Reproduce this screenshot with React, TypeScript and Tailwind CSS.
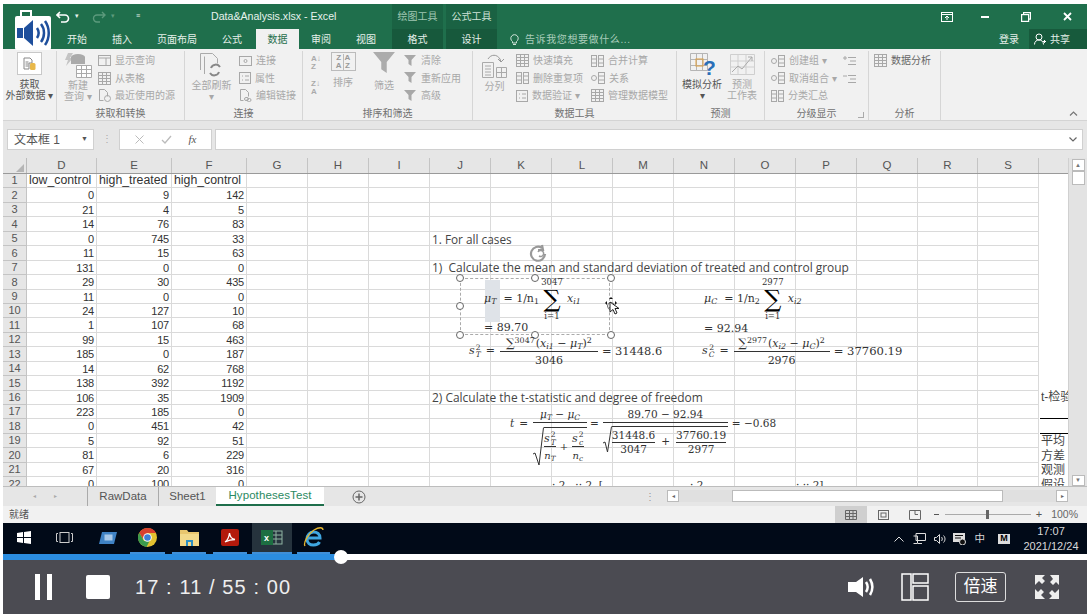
import React from "react";

const data: [string, string, string][] = [
  ["low_control", "high_treated", "high_control"],
  ["0", "9", "142"], ["21", "4", "5"], ["14", "76", "83"], ["0", "745", "33"], ["11", "15", "63"],
  ["131", "0", "0"], ["29", "30", "435"], ["11", "0", "0"], ["24", "127", "10"], ["1", "107", "68"],
  ["99", "15", "463"], ["185", "0", "187"], ["14", "62", "768"], ["138", "392", "1192"], ["106", "35", "1909"],
  ["223", "185", "0"], ["0", "451", "42"], ["5", "92", "51"], ["81", "6", "229"], ["67", "20", "316"],
  ["0", "100", "0"],
];

const sheetCols = [70, 75, 75, 61, 61, 61, 61, 61, 61, 61, 61, 61, 61, 61, 60, 61];
const headers = ["D", "E", "F", "G", "H", "I", "J", "K", "L", "M", "N", "O", "P", "Q", "R", "S"];

function Glyph({ kind }: { kind: string }) {
  const c = "#a8a8a8";
  if (kind === "table")
    return (
      <svg width="13" height="13" viewBox="0 0 13 13" fill="none" stroke={c}>
        <rect x=".5" y=".5" width="12" height="12" />
        <path d="M.5 3.500h12M.5 6.500h12M.5 9.500h12M4.500 .5v12M8.500 .5v12" />
      </svg>
    );
  if (kind === "window")
    return (
      <svg width="13" height="11" viewBox="0 0 13 11" fill="none" stroke={c}>
        <rect x=".5" y=".5" width="12" height="10" />
        <path d="M.5 3h12M8 3v7.500" />
      </svg>
    );
  if (kind === "doc")
    return (
      <svg width="13" height="13" viewBox="0 0 13 13" fill="none" stroke={c}>
        <path d="M1.500 .5h5l3 3v4M1.500 .5v11h4" />
        <circle cx="9.500" cy="9.500" r="3" />
      </svg>
    );
  if (kind === "eye")
    return (
      <svg width="13" height="10" viewBox="0 0 13 10" fill="none" stroke={c}>
        <rect x=".5" y=".5" width="12" height="9" />
        <circle cx="6.500" cy="5" r="1.500" />
      </svg>
    );
  if (kind === "list")
    return (
      <svg width="12" height="12" viewBox="0 0 12 12" fill="none" stroke={c}>
        <rect x=".5" y=".5" width="11" height="11" />
        <path d="M3 4h1M6 4h4M3 8h1M6 8h4" />
      </svg>
    );
  if (kind === "link")
    return (
      <svg width="13" height="13" viewBox="0 0 13 13" fill="none" stroke={c}>
        <path d="M1.500 .5h5l3 3v4M1.500 .5v11h3" />
        <rect x="5.500" y="8.500" width="4" height="3" rx="1.500" />
        <rect x="8" y="9.500" width="4" height="3" rx="1.500" />
      </svg>
    );
  if (kind === "funnel")
    return (
      <svg width="13" height="12" viewBox="0 0 13 12" fill={c}>
        <path d="M0 0h12L7.500 5v6l-3-2V5z" />
      </svg>
    );
  if (kind === "group")
    return (
      <svg width="14" height="12" viewBox="0 0 14 12" fill="none" stroke={c}>
        <circle cx="3" cy="6" r="2.500" />
        <rect x="7.500" y=".5" width="6" height="11" />
        <path d="M7.500 4h6M7.500 8h6" />
      </svg>
    );
  if (kind === "plus")
    return (
      <svg width="13" height="12" viewBox="0 0 13 12" fill="none" stroke={c}>
        <path d="M5 2.500h8M7 6h6M5 9.500h8M0 3h4M2 1v4" />
      </svg>
    );
  if (kind === "minus")
    return (
      <svg width="13" height="12" viewBox="0 0 13 12" fill="none" stroke={c}>
        <path d="M5 2.500h8M7 6h6M5 9.500h8M0 3h4" />
      </svg>
    );
  return (
    <svg width="13" height="12" viewBox="0 0 13 12" fill="none" stroke={c}>
      <rect x=".5" y=".5" width="5" height="11" />
      <rect x="7.500" y=".5" width="5" height="11" />
      <path d="M.5 4h5M.5 8h5M7.500 4h5M7.500 8h5" />
    </svg>
  );
}

function Item({ icon, label, dark }: { icon: string; label: string; dark?: boolean }) {
  return (
    <div className={`flex h-[17.5px] items-center gap-[4px] whitespace-nowrap text-[10px] ${dark ? "text-[#666]" : "text-[#a8a8a8]"}`}>
      <Glyph kind={icon} />
      <span>{label}</span>
    </div>
  );
}

function Group({ w, label, children }: { w: string; label: string; children: React.ReactNode }) {
  return (
    <div className={`relative flex flex-col border-r border-[#d6d6d6] ${w}`}>
      <div className="flex h-[52px] pt-[1px]">{children}</div>
      <div className="mt-auto text-center text-[10px] leading-[13px] text-[#707070]">{label}</div>
    </div>
  );
}

function BigLabel({ children, dark, w }: { children: React.ReactNode; dark?: boolean; w: string }) {
  return (
    <div className={`text-center text-[10px] leading-[11px] ${w} ${dark ? "text-[#555]" : "text-[#a8a8a8]"}`}>{children}</div>
  );
}

function Ribbon() {
  return (
    <div className="flex h-[71px] bg-[#f1f1f1] pt-[2px]">
      <Group w="w-[54px]" label="">
        <div className="flex w-full flex-col items-center">
          <div className="flex h-[23px] w-[25px] items-center justify-center border border-[#c8c8c8] bg-white">
            <svg width="13" height="14" viewBox="0 0 13 14">
              <path d="M1 1h6l2 2v3H6v6H1z" fill="#fff" stroke="#888" />
              <path d="M2.500 5h3M2.500 7h3M2.500 9h3" stroke="#888" />
              <rect x="7" y="6" width="5.500" height="7" rx="1.500" fill="#e8b84a" />
            </svg>
          </div>
          <BigLabel dark w="w-full">
            <div className="mt-[4px]">获取</div>
            <div className="whitespace-nowrap">外部数据 ▾</div>
          </BigLabel>
        </div>
      </Group>
      <Group w="w-[128px]" label="获取和转换">
        <div className="flex w-[38px] flex-col items-center pl-[4px]">
          <svg width="28" height="27" viewBox="0 0 28 27">
            <path d="M4 1l5 0-3 5 3 0-7 8 2-6-3 0z" fill="#c4c4c4" />
            <ellipse cx="14" cy="5" rx="7" ry="3" fill="#aaa" />
            <rect x="7" y="5" width="14" height="7" fill="#aaa" />
            <path d="M12.500 13.500h15v12h-15z M12.500 17.500h15M12.500 21.500h15M17.500 13.500v12M22.500 13.500v12" fill="#fff" stroke="#aaa" />
          </svg>
          <BigLabel w="w-[34px]">
            <div className="mt-[1px]">新建</div>
            <div>查询 ▾</div>
          </BigLabel>
        </div>
        <div className="ml-[3px]">
          <Item icon="window" label="显示查询" />
          <Item icon="table" label="从表格" />
          <Item icon="doc" label="最近使用的源" />
        </div>
      </Group>
      <Group w="w-[118px]" label="连接">
        <div className="flex w-[48px] flex-col items-center pl-[5px]">
          <svg width="26" height="27" viewBox="0 0 26 27" fill="none" stroke="#aaa">
            <path d="M1.500 18V1.500h12l5 5v5" />
            <path d="M5.500 22V4.500" />
            <path d="M21 15a5 5 0 0 0-9 1M11 21a5 5 0 0 0 9-1" stroke="#888" strokeWidth="2" />
          </svg>
          <BigLabel w="w-[44px]">
            <div className="mt-[1px] whitespace-nowrap">全部刷新</div>
            <div>▾</div>
          </BigLabel>
        </div>
        <div className="ml-[6px]">
          <Item icon="eye" label="连接" />
          <Item icon="list" label="属性" />
          <Item icon="link" label="编辑链接" />
        </div>
      </Group>
      <Group w="w-[170px]" label="排序和筛选">
        <div className="flex w-[22px] flex-col gap-[9px] pl-[8px] pt-[3px] text-[8px] font-bold leading-[8px] text-[#aaa]">
          <div>A↓<br />Z</div>
          <div>Z↓<br />A</div>
        </div>
        <div className="ml-[3px] flex flex-col items-center">
          <div className="flex h-[19px] w-[25px] items-center justify-center gap-[1px] border border-[#bbb] text-[8px] font-bold leading-[8px] text-[#999]">
            <span className="text-center">Z<br />A</span>
            <span className="border-l border-[#bbb] pl-[1px] text-center">A<br />Z</span>
          </div>
          <BigLabel w="w-[30px]"><div className="mt-[6px]">排序</div></BigLabel>
        </div>
        <div className="ml-[11px] flex flex-col items-center">
          <svg width="24" height="21" viewBox="0 0 24 23" fill="#acacac"><path d="M0 0h24L15 11v12l-6-4V11z" /></svg>
          <BigLabel w="w-[30px]"><div className="mt-[7px]">筛选</div></BigLabel>
        </div>
        <div className="ml-[5px]">
          <Item icon="funnel" label="清除" />
          <Item icon="funnel" label="重新应用" />
          <Item icon="funnel" label="高级" />
        </div>
      </Group>
      <Group w="w-[204px]" label="数据工具">
        <div className="flex w-[37px] flex-col items-center pl-[6px]">
          <svg width="27" height="27" viewBox="0 0 27 27" fill="none" stroke="#aaa">
            <path d="M1.500 10.500h11v15h-11zM4 14h6M4 17h6M4 20h6M4 23h6" />
            <path d="M15.500 15.500h10v10h-10zM15.500 20.500h10M20.500 15.500v10" />
            <path d="M7 7c3-5 9-5 12 0l1 3M23 7l-3 3-3-3" stroke="#999" />
          </svg>
          <BigLabel w="w-[30px]"><div className="mt-[2px]">分列</div></BigLabel>
        </div>
        <div className="ml-[6px]">
          <Item icon="table" label="快速填充" />
          <Item icon="pair" label="删除重复项" />
          <Item icon="list" label="数据验证 ▾" />
        </div>
        <div className="ml-[8px]">
          <Item icon="pair" label="合并计算" />
          <Item icon="group" label="关系" />
          <Item icon="table" label="管理数据模型" />
        </div>
      </Group>
      <Group w="w-[88px]" label="预测">
        <div className="flex w-[47px] flex-col items-center pl-[3px]">
          <div className="relative h-[27px] w-[26px]">
            <svg width="26" height="26" viewBox="0 0 26 26" fill="none">
              <path d="M1.500 1.500h17v17h-17zM1.500 7.500h17M1.500 13.500h17M7.500 1.500v17M13.500 1.500v17" stroke="#b5b5b5" />
              <rect x="7" y="7" width="7" height="7" stroke="#e0a040" />
              <text x="14" y="23" fontSize="21" fontWeight="700" fill="#2a6fb8" fontFamily="Liberation Sans">?</text>
            </svg>
          </div>
          <BigLabel dark w="w-[46px]">
            <div className="whitespace-nowrap">模拟分析</div>
            <div>▾</div>
          </BigLabel>
        </div>
        <div className="flex w-[36px] flex-col items-center">
          <svg width="25" height="25" viewBox="0 0 25 25" fill="none" stroke="#aaa">
            <path d="M.5 2.500h24v20H.5zM.5 9h24M.5 15h24M8 2.500v20M16 2.500v20" stroke="#cfcfcf" />
            <path d="M2 20l6-6 4 3 10-12M18 5h4v4" />
          </svg>
          <BigLabel w="w-[34px]">
            <div className="mt-[2px]">预测</div>
            <div className="whitespace-nowrap">工作表</div>
          </BigLabel>
        </div>
      </Group>
      <Group w="w-[104px]" label="分级显示">
        <div className="ml-[6px]">
          <Item icon="group" label="创建组 ▾" />
          <Item icon="group" label="取消组合 ▾" />
          <Item icon="pair" label="分类汇总" />
        </div>
        <div className="ml-[6px] flex flex-col gap-[6px] pt-[3px]">
          <Glyph kind="plus" />
          <Glyph kind="minus" />
        </div>
        <span className="absolute bottom-[2px] right-[4px] h-[6px] w-[6px] border-b border-r border-[#aaa]" />
      </Group>
      <Group w="w-[72px]" label="分析">
        <div className="ml-[5px]">
          <Item dark icon="table" label="数据分析" />
        </div>
      </Group>
      <div className="flex flex-1 items-end justify-end pb-[4px] pr-[9px]">
        <svg width="9" height="5" viewBox="0 0 9 5" fill="none" stroke="#777" strokeWidth="1.200"><path d="M1 4.500l3.500-3.500 3.500 3.500" /></svg>
      </div>
    </div>
  );
}

function Titlebar() {
  return (
    <div className="bg-[#1f6f4c] text-white">
      <div className="flex h-[25px] items-center text-[#e8f2ec]">
        <div className="flex w-[207px] items-center pl-[53px]">
          <svg width="14" height="12" viewBox="0 0 14 12" fill="none" stroke="#fff" strokeWidth="1.600">
            <path d="M4 1L1 4l3 3M1 4h8a3.500 3.500 0 0 1 0 7H5" />
          </svg>
          <span className="ml-[5px] text-[7px]">▾</span>
          <svg className="ml-[13px]" width="14" height="12" viewBox="0 0 14 12" fill="none" stroke="#5c9a7c" strokeWidth="1.400">
            <path d="M10 1l3 3-3 3M13 4H5a3.500 3.500 0 0 0 0 7h3" />
          </svg>
          <span className="ml-[5px] text-[7px] text-[#5c9a7c]">▾</span>
          <span className="ml-[21px] text-[7px]">≡</span>
        </div>
        <div className="ml-[1px] w-[126px] whitespace-nowrap text-[10.6px]">Data&amp;Analysis.xlsx - Excel</div>
        <div className="ml-[55px] flex h-full">
          <div className="flex w-[51px] items-center justify-center bg-[#1a6243] text-[10px] text-[#9fc6b2]">绘图工具</div>
          <div className="ml-[3px] flex w-[51px] items-center justify-center bg-[#1a6243] text-[10px] text-[#cfe3d8]">公式工具</div>
        </div>
        <div className="ml-auto flex items-center pr-[15px]">
          <svg width="12" height="10" viewBox="0 0 12 10" fill="none" stroke="#fff"><rect x=".5" y=".5" width="11" height="9" /><path d="M.5 2.500h11M6 8V4M4 6l2-2 2 2" /></svg>
          <span className="ml-[28px] h-[2px] w-[8px] bg-white" />
          <svg className="ml-[32px]" width="10" height="10" viewBox="0 0 10 10" fill="none" stroke="#fff" strokeWidth="1.200"><rect x=".6" y="2.600" width="7" height="6.800" /><path d="M2.600 2.500V.6h6.800v6.500H8" /></svg>
          <svg className="ml-[32px]" width="9" height="9" viewBox="0 0 9 9" stroke="#fff" strokeWidth="1.800"><path d="M1 1l7 7M8 1L1 8" /></svg>
        </div>
      </div>
      <div className="flex h-[20px] items-stretch text-[10px]">
        <div className="flex w-[48px]" />
        {[["开始", "w-[52px]"], ["插入", "w-[38px]"], ["页面布局", "w-[72px]"], ["公式", "w-[38px] mr-[5px]"]].map(([t, w]) => (
          <div key={t} className={`flex items-center justify-center text-[#e6f0ea] ${w}`}>{t}</div>
        ))}
        <div className="flex w-[43px] items-center justify-center bg-[#f1f1f1] text-[#1f6f4c]">数据</div>
        <div className="flex w-[44px] items-center justify-center text-[#e6f0ea]">审阅</div>
        <div className="flex w-[46px] items-center justify-center text-[#e6f0ea]">视图</div>
        <div className="ml-[3px] flex w-[51px] items-center justify-center bg-[#17593c] text-[#e6f0ea]">格式</div>
        <div className="ml-[3px] flex w-[51px] items-center justify-center bg-[#17593c] text-[#e6f0ea]">设计</div>
        <div className="ml-[13px] flex items-center gap-[6px] text-[#a9cdbb]">
          <svg width="9" height="11" viewBox="0 0 9 11" fill="none" stroke="#cfe3d8"><path d="M2.500 7.500a3.700 3.700 0 1 1 4 0V9h-4zM3 10.500h3" /></svg>
          <span className="tracking-[0.6px]">告诉我您想要做什么...</span>
        </div>
        <div className="ml-auto flex items-center text-[#e6f0ea]">
          <span className="mr-[10px]">登录</span>
          <div className="flex h-full w-[58px] items-center gap-[4px] bg-[#175a3c] pl-[5px]">
            <svg width="12" height="12" viewBox="0 0 12 12" fill="none" stroke="#fff"><circle cx="5" cy="4" r="3" /><path d="M.5 11.500c0-3 2-4.500 4.500-4.500s4.500 1.500 4.500 4.500M9 8.500h3M10.500 7v3" /></svg>
            <span>共享</span>
          </div>
        </div>
      </div>
    </div>
  );
}

function FormulaBar() {
  return (
    <div className="flex h-[38px] items-start border-t border-[#d4d4d4] bg-[#e6e6e6] pl-[4px] pr-[4px] pt-[8px]">
      <div className="flex h-[21px] w-[87px] items-center justify-between border border-[#d0d0d0] bg-white pl-[6px] pr-[5px] text-[12px] text-[#555]">
        <span>文本框 1</span><span className="text-[7px]">▼</span>
      </div>
      <span className="w-[25px] pt-[2px] text-center text-[10px] text-[#aaa]">⋮</span>
      <div className="flex h-[21px] w-[93px] items-center justify-around border border-[#d0d0d0] bg-white px-[6px] text-[#bbb]">
        <svg width="9" height="9" viewBox="0 0 9 9" stroke="#bbb"><path d="M.5.5l8 8M8.500.5l-8 8" /></svg>
        <svg width="11" height="9" viewBox="0 0 11 9" fill="none" stroke="#bbb" strokeWidth="1.300"><path d="M1 5l3 3 6-7" /></svg>
        <span className="font-['Liberation_Serif'] text-[11px] italic text-[#555]">fx</span>
      </div>
      <div className="ml-[3px] flex h-[21px] flex-1 items-center justify-end border border-[#d0d0d0] bg-white pr-[5px]">
        <svg width="8" height="5" viewBox="0 0 8 5" fill="none" stroke="#666" strokeWidth="1.200"><path d="M.5.5L4 4 7.500.5" /></svg>
      </div>
    </div>
  );
}

function Sub({ children }: { children: React.ReactNode }) {
  return <span className="align-[-2px] text-[0.72em] leading-none">{children}</span>;
}
function Sup({ children }: { children: React.ReactNode }) {
  return <span className="align-[4px] text-[0.72em] leading-none">{children}</span>;
}
function Frac({ top, bottom, w, low }: { top: React.ReactNode; bottom: React.ReactNode; w?: string; low?: string }) {
  return (
    <span className={`inline-flex flex-col items-center ${w ?? ""}`}>
      <span className="w-full whitespace-nowrap border-b border-[#333] text-center leading-[14px]">{top}</span>
      <span className={`whitespace-nowrap leading-[13px] ${low ?? ""}`}>{bottom}</span>
    </span>
  );
}
function Float({ x, y, className, children }: { x: string; y: string; className?: string; children: React.ReactNode }) {
  return <div className={`absolute whitespace-nowrap ${x} ${y} ${className ?? ""}`}>{children}</div>;
}
function SS({ s }: { s: string }) {
  return (
    <span className="inline-flex items-center italic">
      <span className="text-[11px]">s</span>
      <span className="ml-[1px] flex flex-col items-center text-[7.5px] leading-[7.5px]">
        <span className="not-italic">2</span>
        <span>{s}</span>
      </span>
    </span>
  );
}

function SumEq({ sym, n, up, idx }: { sym: React.ReactNode; n: string; up: string; idx: string }) {
  return (
    <div className="flex items-center font-['DejaVu_Serif'] text-[11px] text-[#333]">
      <span className="italic">μ<Sub>{sym}</Sub></span>
      <span className="ml-[7px]">= 1/n<Sub>{n}</Sub></span>
      <span className="mx-[3px] flex w-[20px] flex-col items-center">
        <span className="text-[8.5px] leading-[9px]">{up}</span>
        <span className="text-[24px] leading-[25px] text-black">∑</span>
        <span className="text-[8.5px] leading-[8px]">i=1</span>
      </span>
      <span className="ml-[2px] italic">x<Sub>{idx}</Sub></span>
    </div>
  );
}

function Handle({ x, y }: { x: string; y: string }) {
  return <span className={`absolute h-[8px] w-[8px] rounded-full border border-[#666] bg-white ${x} ${y}`} />;
}

function Sheet() {
  const tpl = sheetCols.map((c) => `${c}px`).join(" ");
  return (
    <div className="relative h-[328px] overflow-hidden bg-white font-['Liberation_Sans','Noto_Sans_CJK_SC',sans-serif] text-[#333]">
      <div className="flex h-[16px] border-b border-[#9a9a9a] bg-[#e6e6e6] text-[11.5px] text-[#555]">
        <div className="flex w-[24px] shrink-0 items-end justify-end border-r border-[#bbb] pb-[1px] pr-[2px]">
          <span className="h-0 w-0 border-b-[8px] border-l-[8px] border-b-[#b5b5b5] border-l-transparent" />
        </div>
        {headers.map((h, i) => (
          <div key={h} style={{ width: sheetCols[i] }} className="flex shrink-0 items-center justify-center border-r border-[#c4c4c4]">{h}</div>
        ))}
      </div>
      {data.map((r, i) => (
        <div key={i} className="flex h-[14.45px]">
          <div className="flex w-[24px] shrink-0 items-center justify-center border-b border-r border-[#c4c4c4] bg-[#e6e6e6] text-[11px] text-[#555]">{i + 1}</div>
          <div className="grid flex-1" style={{ gridTemplateColumns: tpl }}>
            {headers.map((h, j) => (
              <div key={h} className={`overflow-hidden whitespace-nowrap border-b border-r border-[#dadada] px-[2px] ${i > 0 ? "text-right text-[11px] leading-[14px] tracking-[-0.2px]" : "text-left text-[12.3px] leading-[12px]"}`}>
                {j < 3 ? r[j] : ""}
              </div>
            ))}
          </div>
        </div>
      ))}

      <Float x="left-[429px]" y="top-[73px]" className="font-['Open_Sans'] text-[11.8px] text-[#444]">1. For all cases</Float>
      <Float x="left-[429px]" y="top-[101px]" className="font-['Open_Sans'] text-[11.95px] text-[#444]">1)&nbsp; Calculate the mean and standard deviation of treated and control group</Float>
      <Float x="left-[429px]" y="top-[231px]" className="font-['Open_Sans'] text-[11.95px] text-[#444]">2) Calculate the t-statistic and degree of freedom</Float>

      <Float x="left-[457px]" y="top-[120px]" className="h-[57px] w-[150px] border border-dashed border-[#aaa]">
        <span className="absolute left-[24px] top-[1px] h-[42px] w-[15px] bg-[#dfe3e8]" />
        <Handle x="-left-[5px]" y="-top-[5px]" />
        <Handle x="left-[70px]" y="-top-[5px]" />
        <Handle x="left-[146px]" y="-top-[5px]" />
        <Handle x="-left-[5px]" y="top-[23px]" />
        <Handle x="left-[146px]" y="top-[23px]" />
        <Handle x="-left-[5px]" y="top-[52px]" />
        <Handle x="left-[70px]" y="top-[52px]" />
        <Handle x="left-[146px]" y="top-[52px]" />
      </Float>
      <Float x="left-[481px]" y="top-[120px]"><SumEq sym="T" n="1" up="3047" idx="i1" /></Float>
      <Float x="left-[481px]" y="top-[162px]" className="font-['DejaVu_Serif'] text-[11px]">= 89.70</Float>
      <Float x="left-[466px]" y="top-[178px]" className="flex font-['DejaVu_Serif'] text-[11px]">
        <span className="mt-[7px]"><SS s="T" /></span>
        <span className="ml-[5px] mt-[7px]">=</span>
        <span className="ml-[5px]"><Frac w="w-[98px]" low="pt-[2px]" top={<><span className="text-[12px]">∑</span><Sup>3047</Sup><span className="ml-[1px]">(</span><i>x<Sub>i1</Sub></i> − <i>μ<Sub>T</Sub></i>)<Sup>2</Sup></>} bottom="3046" /></span>
        <span className="ml-[4px] mt-[7px] text-[11.4px]">= 31448.6</span>
      </Float>

      <Float x="left-[701px]" y="top-[120px]"><SumEq sym="C" n="2" up="2977" idx="i2" /></Float>
      <Float x="left-[701px]" y="top-[163px]" className="font-['DejaVu_Serif'] text-[11px]">= 92.94</Float>
      <Float x="left-[699px]" y="top-[178px]" className="flex font-['DejaVu_Serif'] text-[11px]">
        <span className="mt-[7px]"><SS s="C" /></span>
        <span className="ml-[5px] mt-[7px]">=</span>
        <span className="ml-[5px]"><Frac w="w-[96px]" low="pt-[2px]" top={<><span className="text-[12px]">∑</span><Sup>2977</Sup><span className="ml-[1px]">(</span><i>x<Sub>i2</Sub></i> − <i>μ<Sub>C</Sub></i>)<Sup>2</Sup></>} bottom="2976" /></span>
        <span className="ml-[4px] mt-[7px] text-[11.6px]">= 37760.19</span>
      </Float>

      <Float x="left-[507px]" y="top-[249px]" className="flex font-['DejaVu_Serif'] text-[10.5px] text-[#333]">
        <span className="mt-[9px] italic">t</span>
        <span className="ml-[5px] mt-[9px]">=</span>
        <span className="ml-[5px] flex w-[54px] flex-col">
          <span className="w-full border-b border-[#333] text-center leading-[15px]"><i>μ<Sub>T</Sub></i> − <i>μ<Sub>C</Sub></i></span>
          <span className="mt-[4px] flex items-start">
            <svg className="shrink-0" width="11" height="39" viewBox="0 0 11 39" fill="none" stroke="#333"><path d="M0 27l2-1 4 12L10.500 .5" /></svg>
            <span className="flex flex-1 items-center gap-[4px] border-t border-[#333] pt-[3px] text-[10px] leading-[13px]">
              <Frac low="pt-[2px]" top={<SS s="T" />} bottom={<i>n<Sub>T</Sub></i>} />
              <span>+</span>
              <Frac low="pt-[2px]" top={<SS s="c" />} bottom={<i>n<Sub>c</Sub></i>} />
            </span>
          </span>
        </span>
        <span className="ml-[3px] mt-[9px]">=</span>
        <span className="ml-[4px] flex w-[125px] flex-col">
          <span className="w-full border-b border-[#333] text-center leading-[15px]">89.70 − 92.94</span>
          <span className="mt-[3px] flex items-start">
            <svg className="shrink-0" width="9" height="27" viewBox="0 0 9 27" fill="none" stroke="#333"><path d="M0 17l2-1 2.500 10L8.500 .5" /></svg>
            <span className="flex flex-1 items-center gap-[6px] border-t border-[#333] pt-[1px]">
              <Frac top="31448.6" bottom="3047" />
              <span>+</span>
              <Frac top="37760.19" bottom="2977" />
            </span>
          </span>
        </span>
        <span className="ml-[4px] mt-[9px]">= −0.68</span>
      </Float>

      <Float x="left-[549px]" y="top-[320px]" className="font-['DejaVu_Serif'] text-[10.5px] text-[#333]">· 2 &nbsp; ·· 2 &nbsp;[</Float>
      <Float x="left-[687px]" y="top-[320px]" className="font-['DejaVu_Serif'] text-[10.5px] text-[#333]">· 2</Float>
      <Float x="left-[793px]" y="top-[320px]" className="font-['DejaVu_Serif'] text-[10.5px] text-[#333]">· ·· 2]</Float>

      <Float x="left-[1038px]" y="top-[232px]" className="w-[28px] overflow-hidden text-[12px] leading-[15px] text-[#444]">t-检验</Float>
      <Float x="left-[1037px]" y="top-[260px]" className="h-0 w-[29px] border-t border-black" />
      <Float x="left-[1037px]" y="top-[275px]" className="h-0 w-[29px] border-t border-black" />
      <Float x="left-[1038px]" y="top-[276px]" className="w-[28px] overflow-hidden text-[12px] leading-[14.6px] text-[#444]">
        <div>平均</div><div>方差</div><div>观测</div><div>假设</div>
      </Float>

      <div className="absolute bottom-0 right-0 top-0 flex w-[19px] flex-col items-center border-l border-[#d0d0d0] bg-[#e3e3e3] pt-[1px]">
        <div className="flex h-[12px] w-[13px] items-center justify-center border border-[#bbb] bg-white text-[6px] text-[#777]">▲</div>
        <div className="h-[14px] w-[13px] border border-[#bbb] bg-white" />
        <div className="mt-auto flex h-[11px] w-[13px] items-center justify-center border border-[#bbb] bg-white text-[6px] text-[#777]">▼</div>
      </div>
    </div>
  );
}

function SheetTabs() {
  return (
    <div className="flex h-[20px] border-t border-[#bdbdbd] bg-[#e6e6e6] text-[11.5px] text-[#555]">
      <div className="flex w-[84px] items-center justify-center gap-[18px] text-[6px] text-[#aaa]"><span>◂</span><span>▸</span></div>
      <div className="flex w-[71px] items-center justify-center border-l border-[#aaa]">RawData</div>
      <div className="flex w-[58px] items-center justify-center border-l border-[#aaa]">Sheet1</div>
      <div className="flex w-[108px] items-center justify-center border-b-2 border-[#1f6f4c] bg-white tracking-[0.1px] text-[#2b8a62]">HypothesesTest</div>
      <div className="ml-[28px] flex items-center">
        <svg width="14" height="14" viewBox="0 0 14 14" fill="none" stroke="#666"><circle cx="7" cy="7" r="6" /><path d="M3.500 7h7M7 3.500v7" strokeWidth="1.500" /></svg>
      </div>
      <div className="ml-[279px] flex items-center text-[10px] text-[#999]">⋮</div>
      <div className="ml-[12px] mt-[3px] flex h-[12px] w-[401px] items-stretch bg-[#e0e0e0]">
        <div className="flex w-[12px] items-center justify-center border border-[#bbb] bg-white text-[6px] text-[#666]">◂</div>
        <div className="ml-[53px] w-[271px] border border-[#bbb] bg-white" />
        <div className="ml-auto flex w-[12px] items-center justify-center border border-[#bbb] bg-white text-[6px] text-[#666]">▸</div>
      </div>
    </div>
  );
}

function StatusBar() {
  return (
    <div className="flex h-[17px] items-center bg-[#f1f1f1] pl-[6px] text-[10px] text-[#555]">
      <span>就绪</span>
      <div className="ml-auto flex h-full items-center">
        <div className="flex h-full w-[32px] items-center justify-center bg-[#cfcfcf]">
          <svg width="12" height="10" viewBox="0 0 12 10" fill="none" stroke="#666"><path d="M.5.5h11v9H.5zM.5 3.500h11M.5 6.500h11M4.500 .5v9M8 .5v9" /></svg>
        </div>
        <svg className="ml-[11px]" width="11" height="10" viewBox="0 0 11 10" fill="none" stroke="#666"><rect x=".5" y=".5" width="10" height="9" /><rect x="3" y="3" width="5" height="4" /></svg>
        <svg className="ml-[20px]" width="12" height="10" viewBox="0 0 12 10" fill="none" stroke="#666"><path d="M.5 .5h11v9H.5zM6 .5v4H9" /></svg>
        <span className="ml-[13px] h-[1px] w-[5px] bg-[#555]" />
        <div className="relative ml-[6px] h-[1px] w-[86px] bg-[#aaa]">
          <span className="absolute left-[41px] -top-[4px] h-[9px] w-[3px] bg-[#666]" />
        </div>
        <span className="ml-[5px] text-[11px]">+</span>
        <span className="ml-[9px] mr-[9px] text-[10.5px] text-[#666]">100%</span>
      </div>
    </div>
  );
}

function Slot({ w, active, children, className }: { w: string; active?: boolean; children: React.ReactNode; className?: string }) {
  return (
    <div className={`flex h-full items-center justify-center border-b-2 ${active ? "border-[#3f8fd8]" : "border-transparent"} ${w} ${className ?? ""}`}>
      {children}
    </div>
  );
}

function Taskbar() {
  return (
    <div className="flex h-[31px] items-center bg-[#010a18] text-white">
      <Slot w="w-[42px]">
        <svg width="14" height="13" viewBox="0 0 14 13" fill="#fff"><path d="M0 2l6-1v5H0zM7 1l7-1v6H7zM0 7h6v5l-6-1zM7 7h7v6l-7-1z" /></svg>
      </Slot>
      <Slot w="w-[38px]">
        <svg width="19" height="11" viewBox="0 0 19 11" fill="none" stroke="#ccc"><rect x="5" y=".5" width="9" height="10" /><path d="M3 1.500H1.500v8H3M16 1.500h1.500v8H16" /></svg>
      </Slot>
      <Slot w="w-[47px]">
        <svg width="20" height="12" viewBox="0 0 20 12"><path d="M5 0h15l-3 12H2z" fill="#3f82c4" /><rect x="7.500" y="2.500" width="8" height="6" fill="#a9c9e8" /></svg>
      </Slot>
      <Slot w="w-[35px]" active>
        <svg width="19" height="19" viewBox="0 0 19 19">
          <circle cx="9.500" cy="9.500" r="9.500" fill="#e2c130" />
          <path d="M9.500 0A9.500 9.500 0 0 0 1.300 4.700L5 11l4.500-6H18A9.500 9.500 0 0 0 9.500 0z" fill="#d8402f" />
          <path d="M1.300 4.700A9.500 9.500 0 0 0 8.500 19l3-6H6z" fill="#3a9a4e" />
          <circle cx="9.500" cy="9.500" r="4.300" fill="#fff" /><circle cx="9.500" cy="9.500" r="3.300" fill="#3f7fd6" />
        </svg>
      </Slot>
      <Slot w="w-[34px]" active className="ml-[7px]">
        <svg width="19" height="16" viewBox="0 0 19 16"><path d="M0 0h7l1.500 2H19v14H0z" fill="#e8c66e" /><rect y="4" width="19" height="12" fill="#f2d98a" /><rect x="6" y="10" width="7" height="6" fill="#2b8fc4" /><rect x="8" y="12" width="3" height="4" fill="#f2d98a" /></svg>
      </Slot>
      <Slot w="w-[34px]" active className="ml-[7px]">
        <div className="flex h-[17px] w-[18px] items-center justify-center rounded-[2px] bg-[#b31a0c]">
          <svg width="12" height="12" viewBox="0 0 12 12" fill="none" stroke="#fff" strokeWidth="1.300"><path d="M1 10c3-2 4-5 4.500-9 .5 4 2 6 5.500 6.500C7 7.500 4 8.500 1 10z" /></svg>
        </div>
      </Slot>
      <Slot w="w-[40px]" active className="ml-[5px] bg-[#26333d]">
        <svg width="22" height="15" viewBox="0 0 22 15"><rect x="10" y="1" width="11" height="13" fill="none" stroke="#8fb5a3" /><path d="M10 5h11M10 9h11M15 1v13" stroke="#8fb5a3" /><rect width="12" height="15" fill="#1d6f42" /><text x="3" y="11" fontSize="9" fontWeight="700" fontFamily="Liberation Sans" fill="#fff">x</text></svg>
      </Slot>
      <Slot w="w-[33px]" active className="ml-[5px]">
        <svg width="21" height="21" viewBox="0 0 21 21" fill="none">
          <path d="M4 11h13c0-4-3-6-6.500-6S4 8 4 12s3 6 6.500 6c3 0 5-1 6-3" stroke="#3fa7e0" strokeWidth="3" />
          <path d="M2 19C0 16 5 7 11 3c5-3 9-3 9 0" stroke="#e8b830" strokeWidth="1.300" />
        </svg>
      </Slot>
      <div className="ml-auto flex items-center pr-[6px] text-[#d8d8d8]">
        <svg width="10" height="6" viewBox="0 0 10 6" fill="none" stroke="#ddd"><path d="M.5 5.500L5 1l4.500 4.500" /></svg>
        <svg className="ml-[9px]" width="13" height="11" viewBox="0 0 13 11" fill="none" stroke="#ddd"><path d="M3 .5h9.500v7H3zM.5 3h4v7.500h-4M5 10.500h4" /></svg>
        <svg className="ml-[8px]" width="12" height="10" viewBox="0 0 12 10" fill="none" stroke="#ddd"><path d="M.5 3.500h2l3-3v9l-3-3h-2zM7.500 3c1 1 1 3 0 4M9.500 1.500c2 2 2 5 0 7" /></svg>
        <svg className="ml-[7px]" width="13" height="12" viewBox="0 0 13 12" fill="#ddd"><rect width="12" height="9" /><path d="M2 2.500h8M2 5h6" stroke="#111" /><circle cx="9.500" cy="9" r="3" fill="#111" stroke="#ddd" /></svg>
        <span className="ml-[9px] text-[10.5px]">中</span>
        <span className="ml-[13px] flex h-[10px] w-[12px] items-center justify-center bg-[#ddd] text-[9px] font-bold text-black">M</span>
        <div className="ml-[11px] w-[60px] text-center text-[11px] leading-[15px]">
          <div>17:07</div>
          <div className="whitespace-nowrap">2021/12/24</div>
        </div>
      </div>
    </div>
  );
}

function Player() {
  return (
    <div>
      <div className="relative h-[6px] bg-white">
        <div className="h-full w-[338px] bg-[#2b8de0]" />
        <span className="absolute left-[331px] top-[-4px] h-[14px] w-[14px] rounded-full bg-white" />
      </div>
      <div className="flex h-[55px] items-center bg-[#4b4b52] pb-[2px] text-white">
        <div className="ml-[32px] flex gap-[7px]">
          <span className="h-[26px] w-[5px] bg-white" />
          <span className="h-[26px] w-[5px] bg-white" />
        </div>
        <span className="ml-[34px] h-[24px] w-[24px] rounded-[2px] bg-white" />
        <span className="ml-[25px] whitespace-nowrap text-[20px] tracking-[1.1px] text-[#eee]">17 : 11 / 55 : 00</span>
        <div className="ml-auto flex items-center pr-[27px]">
          <svg width="28" height="24" viewBox="0 0 28 24" fill="#fff"><path d="M0 7h8l7-5v20l-7-5H0z" /><path d="M18 7c2 3 2 7 0 10M22 4c3 5 3 11 0 16" stroke="#fff" strokeWidth="2.500" fill="none" /></svg>
          <svg className="ml-[25px]" width="28" height="28" viewBox="0 0 28 28" fill="none" stroke="#fff" strokeWidth="1.500"><rect x="1" y="1" width="9" height="26" /><rect x="12" y="1" width="15" height="9" /><rect x="12" y="13" width="15" height="14" /></svg>
          <div className="ml-[26px] flex h-[30px] w-[51px] items-center justify-center rounded-[3px] border border-[#ddd] text-[17px]">倍速</div>
          <svg className="ml-[28px]" width="26" height="26" viewBox="0 0 26 26" fill="#eee"><path d="M1 1h10L8 4l3 3-3 3-3-3-4 4zM25 1v10l-3-3-3 3-3-3 3-3-3-4zM1 25V15l3 3 3-3 3 3-3 3 4 4zM25 25H15l3-3-3-3 3-3 3 3 4-4z" /></svg>
        </div>
      </div>
    </div>
  );
}

export default function App() {
  return (
    <div className="relative h-[614px] w-[1089px] overflow-hidden bg-white pl-[3px] pr-[2px] pt-[4px] font-['Liberation_Sans','Noto_Sans_CJK_SC',sans-serif]">
      <Titlebar />
      <Ribbon />
      <FormulaBar />
      <Sheet />
      <SheetTabs />
      <StatusBar />
      <Taskbar />
      <Player />
      <div className="absolute left-[20px] top-[10px] h-[8px] w-[12px] border-x-2 border-t-2 border-white" />
      <div className="absolute left-[15px] top-[16px] flex h-[34px] w-[36px] items-center justify-center rounded-[2px] bg-white">
        <svg width="34" height="28" viewBox="0 0 34 28" fill="#1e4f9c">
          <rect x="1" y="9" width="6" height="10" />
          <path d="M8 9l9-8v26l-9-8z" />
          <path d="M21 9c2 3 2 7 0 10M25 5c4 5 4 13 0 18M29 2c5 7 5 17 0 24" stroke="#1e4f9c" strokeWidth="2.500" fill="none" />
        </svg>
      </div>
      <svg className="absolute left-[527px] top-[244px]" width="22" height="20" viewBox="0 0 22 20" fill="none" stroke="#999" strokeWidth="2.200">
        <path d="M18 10a7 7 0 1 1-3-6" /><path d="M11 8a3 3 0 1 1 1 4" strokeWidth="1.500" /><path d="M15 1l1 5-5 0" />
      </svg>
      <svg className="absolute left-[604px] top-[296px]" width="18" height="20" viewBox="0 0 18 20">
        <path d="M7 1l-2 2h4zM7 13l-2-2h4zM1 7l2-2v4zM13 7l-2-2v4z" fill="#111" />
        <path d="M6 6v10l3-2.500 2 4.500 2-1-2-4.500h4z" fill="#fff" stroke="#222" />
      </svg>
    </div>
  );
}
